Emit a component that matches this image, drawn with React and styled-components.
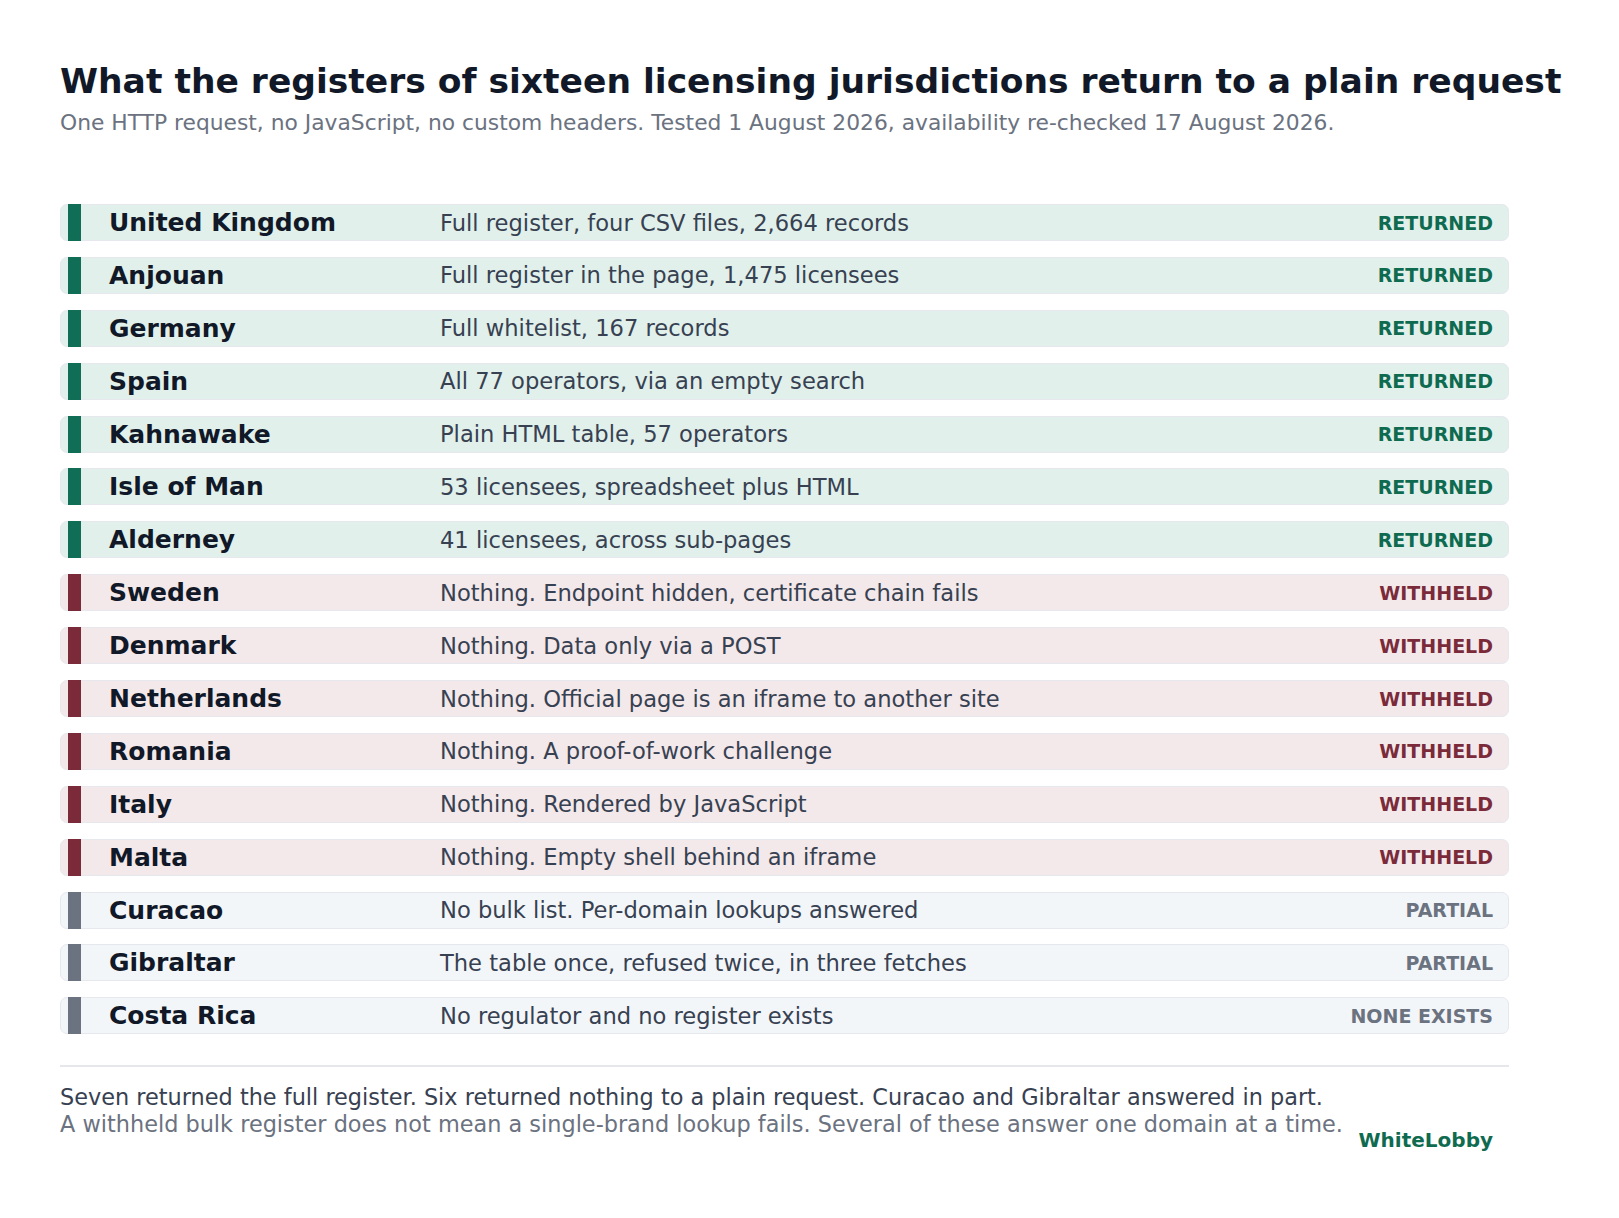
import React from "react";
import styled, { createGlobalStyle } from "styled-components";

const GlobalStyle = createGlobalStyle`
  body {
    margin: 0;
    background: #fff;
    font-family: "DejaVu Sans", "Noto Sans", sans-serif;
  }
`;

const tones = {
  returned: { bar: "#0f6e55", bg: "#e1f0eb", text: "#0f6b50", label: "RETURNED" },
  withheld: { bar: "#7a2a39", bg: "#f3e8ea", text: "#7a2a39", label: "WITHHELD" },
  partial: { bar: "#6b7280", bg: "#f3f6f9", text: "#6b7280", label: "PARTIAL" },
  none: { bar: "#6b7280", bg: "#f3f6f9", text: "#6b7280", label: "NONE EXISTS" },
};

const rows = [
  ["United Kingdom", "Full register, four CSV files, 2,664 records", "returned"],
  ["Anjouan", "Full register in the page, 1,475 licensees", "returned"],
  ["Germany", "Full whitelist, 167 records", "returned"],
  ["Spain", "All 77 operators, via an empty search", "returned"],
  ["Kahnawake", "Plain HTML table, 57 operators", "returned"],
  ["Isle of Man", "53 licensees, spreadsheet plus HTML", "returned"],
  ["Alderney", "41 licensees, across sub-pages", "returned"],
  ["Sweden", "Nothing. Endpoint hidden, certificate chain fails", "withheld"],
  ["Denmark", "Nothing. Data only via a POST", "withheld"],
  ["Netherlands", "Nothing. Official page is an iframe to another site", "withheld"],
  ["Romania", "Nothing. A proof-of-work challenge", "withheld"],
  ["Italy", "Nothing. Rendered by JavaScript", "withheld"],
  ["Malta", "Nothing. Empty shell behind an iframe", "withheld"],
  ["Curacao", "No bulk list. Per-domain lookups answered", "partial"],
  ["Gibraltar", "The table once, refused twice, in three fetches", "partial"],
  ["Costa Rica", "No regulator and no register exists", "none"],
];

const Page = styled.div`
  width: 1449px;
  padding: 60px;
`;

const Title = styled.h1`
  margin: 0;
  font-size: 34.5px;
  line-height: 42px;
  font-weight: 700;
  color: #111827;
  white-space: nowrap;
`;

const Subtitle = styled.p`
  margin: 7px 0 0;
  font-size: 21.8px;
  line-height: 28px;
  color: #6b7280;
`;

const List = styled.div`
  margin-top: 67px;
  display: flex;
  flex-direction: column;
  gap: 15.9px;
`;

const Row = styled.div`
  height: 37px;
  box-sizing: border-box;
  display: flex;
  align-items: center;
  padding: 0 15px 0 7px;
  border: 1px solid #e6e8ee;
  border-radius: 7px;
  background: ${(p) => p.$tone.bg};
`;

const Bar = styled.div`
  width: 13px;
  align-self: stretch;
  margin: -1px 28px -1px 0;
  background: ${(p) => p.$tone.bar};
`;

const Name = styled.div`
  width: 331px;
  font-size: 25px;
  font-weight: 700;
  color: #111827;
`;

const Desc = styled.div`
  flex: 1;
  font-size: 22.6px;
  color: #374151;
`;

const Status = styled.div`
  font-size: 19px;
  font-weight: 700;
  color: ${(p) => p.$tone.text};
`;

const Divider = styled.hr`
  margin: 31px 0 0;
  border: none;
  border-top: 2px solid #e5e7eb;
`;

const Footer = styled.div`
  display: flex;
  justify-content: space-between;
  align-items: flex-start;
  padding: 17px 16px 0 0;
`;

const Notes = styled.div`
  font-size: 22.4px;
  line-height: 27px;
`;

const Lead = styled.div`
  color: #374151;
`;

const Caveat = styled.div`
  color: #6b7280;
`;

const Brand = styled.div`
  margin-top: 44px;
  font-size: 20px;
  line-height: 24px;
  font-weight: 700;
  color: #0f6b50;
`;

export default function App() {
  return (
    <Page>
      <GlobalStyle />
      <Title>What the registers of sixteen licensing jurisdictions return to a plain request</Title>
      <Subtitle>
        One HTTP request, no JavaScript, no custom headers. Tested 1 August 2026, availability re-checked 17 August 2026.
      </Subtitle>
      <List>
        {rows.map(([name, desc, kind]) => {
          const tone = tones[kind];
          return (
            <Row key={name} $tone={tone}>
              <Bar $tone={tone} />
              <Name>{name}</Name>
              <Desc>{desc}</Desc>
              <Status $tone={tone}>{tone.label}</Status>
            </Row>
          );
        })}
      </List>
      <Divider />
      <Footer>
        <Notes>
          <Lead>Seven returned the full register. Six returned nothing to a plain request. Curacao and Gibraltar answered in part.</Lead>
          <Caveat>A withheld bulk register does not mean a single-brand lookup fails. Several of these answer one domain at a time.</Caveat>
        </Notes>
        <Brand>WhiteLobby</Brand>
      </Footer>
    </Page>
  );
}
